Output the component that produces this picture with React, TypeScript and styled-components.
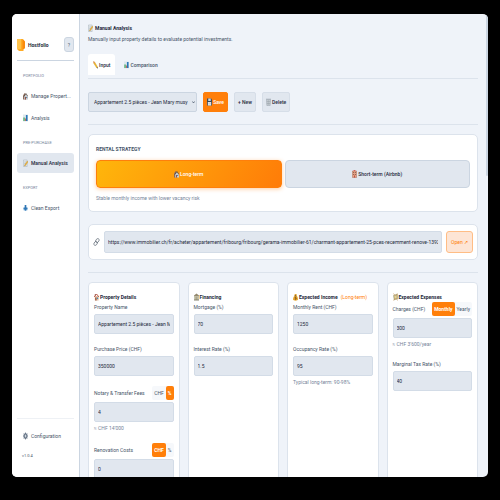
import React, { useId, useState } from "react";
import styled, { createGlobalStyle, css } from "styled-components";

const c = {
  ink: "#1e293b",
  text: "#475569",
  muted: "#75849a",
  line: "#dce3ec",
  border: "#cbd5e1",
  field: "#e1e7ef",
  page: "#eff3f9",
  orange: "#ff7f0a",
};

const GlobalStyle = createGlobalStyle`
  *, *::before, *::after { box-sizing: border-box; }
  html, body { margin: 0; background: #000; }
  body, button, input, select {
    font-family: Roboto, "Liberation Sans", sans-serif;
    font-size: 5px;
    line-height: 10px;
  }
  body { color: ${c.ink}; overflow: hidden; }
  button, input, select { color: inherit; margin: 0; }
  button { cursor: pointer; white-space: nowrap; }
  h1, h2, p { margin: 0; font-size: 5px; }
`;

const Desktop = styled.div`
  height: 100vh;
  padding: 14px 12px 23px;
  background: #000;
`;

const Window = styled.div`
  display: flex;
  height: 100%;
  overflow: hidden;
  border-radius: 5px;
  background: ${c.page};
`;

/* ---------- icons ---------- */

type IconName =
  | "memo" | "pencil" | "chart" | "save" | "trash" | "houses" | "hotel"
  | "link" | "house" | "bank" | "money" | "cash" | "upload" | "gear";

const drawings: Record<IconName, React.ReactNode> = {
  memo: (
    <>
      <path d="M1 2h9v13H1z" fill="#e9edf0" stroke="#9aa7b3" />
      <path d="M3 6h5M3 9h4M3 12h5" stroke="#8795a3" />
      <path d="M4 12 10 4l2 2-6 7-3 1z" fill="#f2b632" stroke="#a8761c" strokeWidth=".5" />
    </>
  ),
  pencil: (
    <>
      <path d="M1 1l3 1 7 10-2 2L2 5z" fill="#f6bb2b" stroke="#a87912" strokeWidth=".6" />
      <path d="M1 1l3 1-2 3z" fill="#e8837e" />
      <path d="M9 14l2-2 1 3z" fill="#4a3b2b" />
    </>
  ),
  chart: (
    <>
      <path d="M0 1h12v14H0z" fill="#dfe8ee" />
      <path d="M1 7h3v7H1z" fill="#3fa65a" />
      <path d="M5 9h2v5H5z" fill="#c94c45" />
      <path d="M7 2h4v12H7z" fill="#2878b8" />
    </>
  ),
  save: (
    <>
      <path d="M0 1h10l2 2v12H0z" fill="#3b4856" />
      <path d="M3 1h6v5H3z" fill="#c9d5df" />
      <path d="M2 8h8v7H2z" fill="#eef2f5" />
      <path d="M3 10h6M3 12h6" stroke="#8fa0ae" />
    </>
  ),
  trash: (
    <>
      <path d="M1 3h10l-1 12H2z" fill="#dde2e6" stroke="#87929c" />
      <path d="M0 2h12M4 4v10M6 4v10M8 4v10M2 7h8M2 11h8" stroke="#87929c" strokeWidth=".8" />
    </>
  ),
  houses: (
    <>
      <path d="M0 7l4-5 4 4v9H0z" fill="#8c6b5c" />
      <path d="M3 9l4-5 5 5v6H3z" fill="#c6ced5" />
      <path d="M2 9l5-6 5 6" fill="none" stroke="#51413b" strokeWidth="1.5" />
      <path d="M5 10h2v5H5z" fill="#8b3d2e" />
      <path d="M8 10h2v2H8z" fill="#315f86" />
    </>
  ),
  hotel: (
    <>
      <path d="M1 2h10v13H1z" fill="#e5a487" stroke="#a2614d" />
      <path d="M3 4h2v2H3zM7 4h2v2H7zM3 8h2v2H3zM7 8h2v2H7z" fill="#80503f" />
      <path d="M5 11h2v4H5z" fill="#b83e36" />
      <path d="M4 1h4" stroke="#d6544f" strokeWidth="2" />
    </>
  ),
  link: (
    <g fill="none" stroke="#66717d" strokeWidth="1.4">
      <rect x="5" y="1" width="5" height="8" rx="2.5" transform="rotate(25 7 5)" />
      <rect x="2" y="7" width="5" height="8" rx="2.5" transform="rotate(25 5 11)" />
    </g>
  ),
  house: (
    <>
      <path d="M2 6h9v9H2z" fill="#e3bda4" />
      <path d="M0 8l6-6 6 6" fill="none" stroke="#b5493b" strokeWidth="2" />
      <path d="M2 2h2v3H2z" fill="#8d4637" />
      <path d="M3 9h3v6H3z" fill="#8d4e35" />
      <path d="M7 9h3v3H7z" fill="#4a8db6" />
    </>
  ),
  bank: (
    <>
      <path d="M0 5l6-4 6 4v2H0z" fill="#93896f" />
      <path d="M1 7h10v7H1z" fill="#ddd3b4" />
      <path d="M2 7v7M5 7v7M7 7v7M10 7v7" stroke="#6f7660" />
      <path d="M0 13h12v2H0z" fill="#86826f" />
    </>
  ),
  money: (
    <>
      <path d="M4 2h5L8 5c3 2 4 5 4 8-1 3-11 3-12 0 0-3 2-6 4-8z" fill="#e7a62f" />
      <path d="M4 5h4" stroke="#73501c" strokeWidth="1.5" />
      <path d="M8 8H5v2h3v2H4M6 7v7" fill="none" stroke="#79500f" />
    </>
  ),
  cash: (
    <>
      <path d="M1 5l9-3 2 9-9 3z" fill="#c9bd8c" stroke="#7d7a55" strokeWidth=".8" />
      <path d="M1 1l4 4M11 1L8 5M1 15l4-4M11 15l-3-4" stroke="#c58c40" strokeWidth="1.3" />
      <circle cx="6" cy="8" r="2" fill="#eed391" />
    </>
  ),
  upload: (
    <>
      <path d="M0 8h12l-2 5H2z" fill="#7fb0d8" />
      <path d="M4 2h4v5h3l-5 7-5-7h3z" fill="#2f76b5" />
    </>
  ),
  gear: (
    <>
      <ellipse cx="6" cy="8" rx="4" ry="5" fill="#8996a5" stroke="#59687a" strokeWidth="1.5" />
      <path d="M6 1v3M6 12v3M0 8h2M10 8h2M2 3l1 2M10 3L9 5M2 13l1-2M10 13l-1-2" stroke="#59687a" strokeWidth="1.5" />
      <circle cx="6" cy="8" r="1.5" fill="#fff" />
    </>
  ),
};

const IconSvg = styled.svg<{ $w: number }>`
  flex: none;
  width: ${(p) => p.$w}px;
  height: 8px;
`;

const Icon = ({ name, w = 5 }: { name: IconName; w?: number }) => (
  <IconSvg $w={w} viewBox="0 0 12 16" preserveAspectRatio="none" aria-hidden="true">
    {drawings[name]}
  </IconSvg>
);

/* ---------- sidebar ---------- */

const Sidebar = styled.aside`
  display: flex;
  flex-direction: column;
  flex: none;
  width: 68px;
  padding: 23px 5px 16px;
  background: #fff;
  border-right: 1px solid ${c.border};
`;

const Brand = styled.div`
  display: flex;
  align-items: center;
  gap: 3px;
  padding-bottom: 8px;
  border-bottom: 1px solid ${c.border};
  font-weight: 700;
`;

const Logo = styled.svg`
  width: 8px;
  height: 13px;
`;

const HelpButton = styled.button`
  width: 10px;
  height: 15px;
  margin-left: auto;
  padding: 0;
  border: 1px solid ${c.border};
  border-radius: 3px;
  background: ${c.field};
  color: ${c.text};
`;

const NavGroup = styled.nav`
  display: grid;
  gap: 2px;
  margin-top: 10px;
`;

const NavHeading = styled.h2`
  margin-bottom: 3px;
  padding-left: 6px;
  color: ${c.muted};
  font-size: 4px;
  font-weight: 400;
`;

const NavLink = styled.a<{ $active?: boolean }>`
  display: flex;
  align-items: center;
  gap: 3px;
  height: 20px;
  padding: 0 6px;
  border-radius: 3px;
  color: ${(p) => (p.$active ? c.ink : c.text)};
  background: ${(p) => (p.$active ? c.field : "transparent")};
  font-weight: ${(p) => (p.$active ? 500 : 400)};
  text-decoration: none;
  white-space: nowrap;
`;

const SidebarFooter = styled.footer`
  margin-top: auto;
  padding-top: 7px;
  border-top: 1px solid #eef1f5;
`;

const Version = styled.p`
  margin-top: 5px;
  padding-left: 5px;
  color: ${c.text};
  font-size: 4px;
`;

/* ---------- main ---------- */

const Main = styled.main`
  flex: 1;
  min-width: 0;
  overflow: hidden;
  padding: 9px 8px 0;
`;

const ScrollTrack = styled.div`
  flex: none;
  width: 2px;
`;

const ScrollThumb = styled.div`
  height: 35%;
  border-radius: 1px;
  background: ${c.border};
`;

const PageTitle = styled.h1`
  display: flex;
  align-items: center;
  gap: 2px;
`;

const Subtitle = styled.p`
  color: ${c.text};
  line-height: 13px;
`;

const Tabs = styled.div`
  display: flex;
  gap: 4px;
  margin-top: 8px;
  padding-bottom: 3px;
  border-bottom: 1px solid ${c.line};
`;

const Tab = styled.button<{ $active: boolean }>`
  display: flex;
  align-items: center;
  gap: 1px;
  height: 21px;
  padding: 0 5px;
  border: 0;
  border-radius: 3px 3px 0 0;
  background: ${(p) => (p.$active ? "#fff" : "transparent")};
  color: ${(p) => (p.$active ? c.ink : c.text)};
  font-weight: 500;
`;

const Toolbar = styled.div`
  display: flex;
  align-items: center;
  gap: 6px;
  padding: 13px 0 12px;
  border-bottom: 1px solid ${c.line};
`;

const SelectBox = styled.div`
  display: grid;
  width: 28%;
  align-items: center;
  justify-items: end;

  > * { grid-area: 1 / 1; }
`;

const Select = styled.select`
  appearance: none;
  width: 100%;
  height: 20px;
  padding: 0 8px 0 5px;
  border: 1px solid ${c.border};
  border-radius: 2px;
  background: ${c.field};
`;

const Chevron = styled.svg`
  width: 3px;
  height: 4px;
  margin-right: 2px;
  pointer-events: none;
`;

const ToolButton = styled.button<{ $primary?: boolean }>`
  display: flex;
  align-items: center;
  gap: 1px;
  height: 20px;
  padding: 0 3px;
  border: 1px solid ${(p) => (p.$primary ? c.orange : "#d6dee8")};
  border-radius: 2px;
  background: ${(p) => (p.$primary ? c.orange : c.field)};
  color: ${(p) => (p.$primary ? "#fff" : c.ink)};
  font-weight: 500;
`;

const panel = css`
  background: #fff;
  border: 1px solid ${c.line};
  border-radius: 5px;
`;

const StrategyCard = styled.section`
  ${panel}
  margin-top: 9px;
  padding: 8px 7px;
`;

const StrategyTitle = styled.h2`
  color: ${c.text};
  line-height: 12px;
`;

const StrategyOptions = styled.div`
  display: grid;
  grid-template-columns: 1fr 1fr;
  gap: 3px;
  margin: 5px 0;
`;

const StrategyButton = styled.button<{ $active: boolean }>`
  display: flex;
  align-items: center;
  justify-content: center;
  gap: 1px;
  height: 28px;
  border: 1px solid ${(p) => (p.$active ? c.orange : c.border)};
  border-radius: 4px;
  color: ${(p) => (p.$active ? "#fff" : c.ink)};
  background: ${(p) => (p.$active ? "linear-gradient(120deg, #ffb60b, #ff7c08)" : c.field)};
  box-shadow: ${(p) => (p.$active ? "0 1px 4px rgba(255, 127, 10, 0.4)" : "none")};
  font-weight: 500;
`;

const Hint = styled.p`
  color: ${c.muted};
  white-space: nowrap;
`;

const UrlCard = styled.section`
  ${panel}
  display: flex;
  align-items: center;
  gap: 4px;
  margin-top: 12px;
  padding: 6px 4px;
`;

const inputLook = css`
  min-width: 0;
  border: 1px solid #d3dce7;
  border-radius: 2px;
  background: ${c.field};
`;

const UrlInput = styled.input`
  ${inputLook}
  flex: 1;
  height: 22px;
  padding: 0 3px;
`;

const OpenLink = styled.a`
  display: flex;
  align-items: center;
  height: 22px;
  padding: 0 4px;
  border: 1px solid #ffbd85;
  border-radius: 3px;
  background: #fde5d5;
  color: ${c.orange};
  text-decoration: none;
`;

const Divider = styled.hr`
  height: 1px;
  margin: 12px 0 9px;
  border: 0;
  background: ${c.line};
`;

const CardGrid = styled.div`
  display: grid;
  grid-template-columns: repeat(4, minmax(0, 1fr));
  gap: 8px;
`;

const Card = styled.section`
  ${panel}
  min-height: 210px;
  border-radius: 4px;
  padding: 9px 5px;
`;

const CardTitle = styled.h2`
  display: flex;
  align-items: center;
  gap: 1px;
  white-space: nowrap;
`;

const Accent = styled.span`
  margin-left: 2px;
  color: ${c.orange};
  font-weight: 400;
`;

const Field = styled.div`
  margin-bottom: 10px;
`;

const LabelRow = styled.div`
  display: flex;
  align-items: center;
  justify-content: space-between;
  margin-bottom: 2px;
  white-space: nowrap;
`;

const Label = styled.label`
  color: ${c.text};
`;

const FieldInput = styled.input`
  ${inputLook}
  display: block;
  width: 100%;
  height: 20px;
  margin-bottom: 1px;
  padding: 0 3px;
`;

const Switch = styled.div`
  display: flex;
  border-radius: 2px;
  background: #f6f8fb;
`;

const SwitchButton = styled.button<{ $on: boolean }>`
  height: 14px;
  padding: 0 2px;
  border: 0;
  border-radius: 2px;
  font-weight: ${(p) => (p.$on ? 700 : 400)};
  background: ${(p) => (p.$on ? c.orange : "transparent")};
  color: ${(p) => (p.$on ? "#fff" : c.text)};
`;

type FieldProps = {
  label: string;
  value: string;
  units?: string[];
  unit?: string;
  hint?: string;
};

function FormField({ label, value, units, unit, hint }: FieldProps) {
  const id = useId();
  const [current, setCurrent] = useState(unit);
  return (
    <Field>
      <LabelRow>
        <Label htmlFor={id}>{label}</Label>
        {units && (
          <Switch role="group" aria-label={label}>
            {units.map((u) => (
              <SwitchButton
                key={u}
                type="button"
                $on={u === current}
                aria-pressed={u === current}
                onClick={() => setCurrent(u)}
              >
                {u}
              </SwitchButton>
            ))}
          </Switch>
        )}
      </LabelRow>
      <FieldInput id={id} defaultValue={value} />
      {hint && <Hint>{hint}</Hint>}
    </Field>
  );
}

const cards: { icon: IconName; title: string; note?: string; fields: FieldProps[] }[] = [
  {
    icon: "house",
    title: "Property Details",
    fields: [
      { label: "Property Name", value: "Appartement 2.5 pièces - Jean Mary musy" },
      { label: "Purchase Price (CHF)", value: "350000" },
      { label: "Notary & Transfer Fees", value: "4", units: ["CHF", "%"], unit: "%", hint: "≈ CHF 14’000" },
      { label: "Renovation Costs", value: "0", units: ["CHF", "%"], unit: "CHF" },
    ],
  },
  {
    icon: "bank",
    title: "Financing",
    fields: [
      { label: "Mortgage (%)", value: "70" },
      { label: "Interest Rate (%)", value: "1.5" },
    ],
  },
  {
    icon: "money",
    title: "Expected Income",
    note: "(Long-term)",
    fields: [
      { label: "Monthly Rent (CHF)", value: "1250" },
      { label: "Occupancy Rate (%)", value: "95", hint: "Typical long-term: 90-98%" },
    ],
  },
  {
    icon: "cash",
    title: "Expected Expenses",
    fields: [
      { label: "Charges (CHF)", value: "300", units: ["Monthly", "Yearly"], unit: "Monthly", hint: "≈ CHF 3’600/year" },
      { label: "Marginal Tax Rate (%)", value: "40" },
    ],
  },
];

const navigation: { heading: string; items: { icon: IconName; label: string; active?: boolean }[] }[] = [
  {
    heading: "PORTFOLIO",
    items: [
      { icon: "houses", label: "Manage Propert..." },
      { icon: "chart", label: "Analysis" },
    ],
  },
  { heading: "PRE-PURCHASE", items: [{ icon: "memo", label: "Manual Analysis", active: true }] },
  { heading: "EXPORT", items: [{ icon: "upload", label: "Clean Export" }] },
];

const listingUrl =
  "https://www.immobilier.ch/fr/acheter/appartement/fribourg/fribourg/gerama-immobilier-61/charmant-appartement-25-pces-recemment-renove-1392045";

export default function App() {
  const [tab, setTab] = useState("input");
  const [strategy, setStrategy] = useState("long");

  return (
    <>
      <GlobalStyle />
      <Desktop>
        <Window>
          <Sidebar>
            <Brand>
              <Logo viewBox="0 0 16 26" aria-hidden="true">
                <path d="M0 2h12l4 5v13l-3 3v3H4l-4-4z" fill="#ffab24" />
                <path d="M0 2h8v20H0z" fill="#ffc34c" />
                <path d="M11 4h2l3 4v12l-5 3z" fill="#f98b10" />
              </Logo>
              Hostfolio
              <HelpButton type="button" aria-label="Help">?</HelpButton>
            </Brand>
            {navigation.map((group) => (
              <NavGroup key={group.heading} aria-label={group.heading}>
                <NavHeading>{group.heading}</NavHeading>
                {group.items.map((item) => (
                  <NavLink key={item.label} href="#" $active={item.active}>
                    <Icon name={item.icon} />
                    {item.label}
                  </NavLink>
                ))}
              </NavGroup>
            ))}
            <SidebarFooter>
              <NavLink href="#">
                <Icon name="gear" />
                Configuration
              </NavLink>
              <Version>v1.0.4</Version>
            </SidebarFooter>
          </Sidebar>

          <Main>
            <PageTitle>
              <Icon name="memo" />
              Manual Analysis
            </PageTitle>
            <Subtitle>Manually input property details to evaluate potential investments.</Subtitle>

            <Tabs role="tablist">
              <Tab role="tab" type="button" $active={tab === "input"} aria-selected={tab === "input"} onClick={() => setTab("input")}>
                <Icon name="pencil" />
                Input
              </Tab>
              <Tab role="tab" type="button" $active={tab === "comparison"} aria-selected={tab === "comparison"} onClick={() => setTab("comparison")}>
                <Icon name="chart" />
                Comparison
              </Tab>
            </Tabs>

            <Toolbar>
              <SelectBox>
                <Select aria-label="Saved analysis">
                  <option>Appartement 2.5 pièces - Jean Mary musy</option>
                </Select>
                <Chevron viewBox="0 0 6 8" aria-hidden="true">
                  <path d="M1 3l2 3 2-3" fill="none" stroke={c.text} strokeWidth="1.5" />
                </Chevron>
              </SelectBox>
              <ToolButton type="button" $primary>
                <Icon name="save" />
                Save
              </ToolButton>
              <ToolButton type="button">+ New</ToolButton>
              <ToolButton type="button">
                <Icon name="trash" />
                Delete
              </ToolButton>
            </Toolbar>

            <StrategyCard>
              <StrategyTitle>RENTAL STRATEGY</StrategyTitle>
              <StrategyOptions>
                <StrategyButton type="button" $active={strategy === "long"} aria-pressed={strategy === "long"} onClick={() => setStrategy("long")}>
                  <Icon name="houses" />
                  Long-term
                </StrategyButton>
                <StrategyButton type="button" $active={strategy === "short"} aria-pressed={strategy === "short"} onClick={() => setStrategy("short")}>
                  <Icon name="hotel" />
                  Short-term (Airbnb)
                </StrategyButton>
              </StrategyOptions>
              <Hint>Stable monthly income with lower vacancy risk</Hint>
            </StrategyCard>

            <UrlCard>
              <Icon name="link" w={7} />
              <UrlInput aria-label="Listing URL" defaultValue={listingUrl} />
              <OpenLink href="#">Open ↗</OpenLink>
            </UrlCard>

            <Divider />

            <CardGrid>
              {cards.map((card) => (
                <Card key={card.title}>
                  <CardTitle>
                    <Icon name={card.icon} />
                    {card.title}
                    {card.note && <Accent>{card.note}</Accent>}
                  </CardTitle>
                  {card.fields.map((field) => (
                    <FormField key={field.label} {...field} />
                  ))}
                </Card>
              ))}
            </CardGrid>
          </Main>
          <ScrollTrack>
            <ScrollThumb />
          </ScrollTrack>
        </Window>
      </Desktop>
    </>
  );
}
